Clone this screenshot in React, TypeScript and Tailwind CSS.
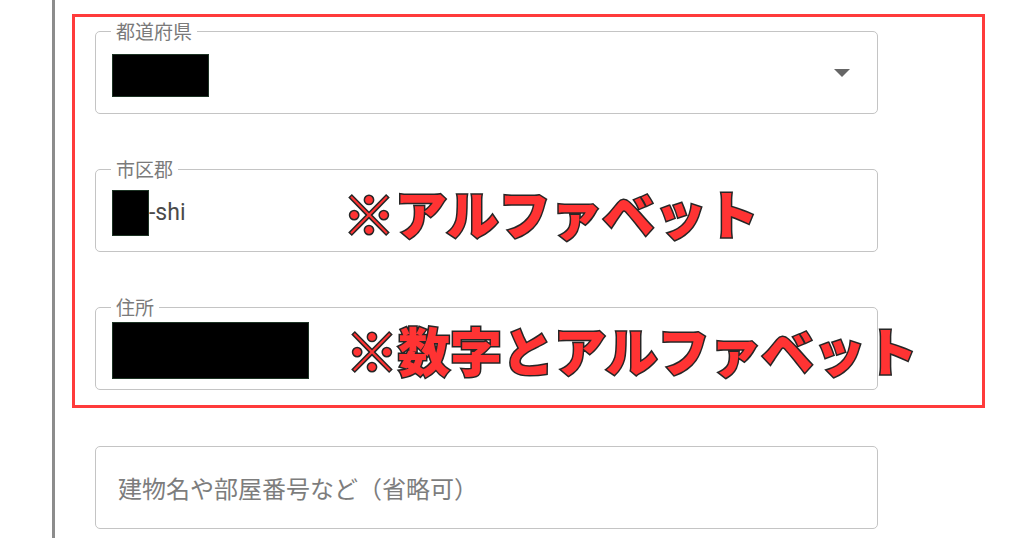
import React from "react";

const jp = "font-['Noto_Sans_CJK_JP','Noto_Sans',sans-serif]";

// outlined field with a label sitting in the top border notch
const Field = ({
  label,
  children,
  className = "",
}: {
  label?: string;
  children?: React.ReactNode;
  className?: string;
}) => (
  <div
    className={`relative h-[83px] w-[783px] rounded-[5px] border-[1.5px] border-[#c4c4c4] bg-white ${className}`}
  >
    {label && (
      <span
        className={`absolute -top-[11px] left-[15px] bg-white px-[5px] text-[19px] leading-[20px] text-[#7a7a7a] ${jp}`}
      >
        {label}
      </span>
    )}
    {children}
  </div>
);

const Mask = ({ w, h }: { w: number; h: number }) => (
  <div
    className="border border-[#1d3324] bg-black"
    style={{ width: w, height: h }}
  />
);

const Note = ({ text, className }: { text: string; className: string }) => (
  <span
    className={`absolute whitespace-nowrap text-[52px] font-black leading-none text-[#ff3333] [-webkit-text-stroke:3px_#262626] [paint-order:stroke_fill] ${jp} ${className}`}
  >
    {text}
  </span>
);

export default function App() {
  return (
    <div className="flex h-[538px] w-[1024px] overflow-hidden bg-white pl-[52px]">
      {/* left rule */}
      <div className="w-[3px] self-stretch bg-[#8c8c8c]" />

      <div className="ml-[17px] flex flex-col pt-[14px]">
        {/* highlighted block */}
        <div className="flex w-[913px] flex-col gap-[55px] border-[3px] border-[#ff3b3b] pb-[15px] pl-[20px] pt-[14px]">
          <Field label="都道府県" className="flex items-center pl-[16px] pt-[5px]">
            <Mask w={97} h={43} />
            <svg
              className="absolute right-[27px] top-[37px]"
              width="16"
              height="8"
              viewBox="0 0 16 8"
            >
              <path d="M0 0h16L8 8z" fill="#666" />
            </svg>
          </Field>

          <Field label="市区郡" className="flex items-center pl-[16px] pt-[5px]">
            <Mask w={37} h={46} />
            <span className="font-['Roboto','Liberation_Sans',sans-serif] text-[23px] text-[#4a4a4a]">
              -shi
            </span>
            <Note text="※アルファベット" className="left-[247px] top-[17px]" />
          </Field>

          <Field label="住所" className="flex items-center pl-[16px] pt-[4px]">
            <Mask w={197} h={57} />
            <Note text="※数字とアルファベット" className="left-[250px] top-[16px]" />
          </Field>
        </div>

        <div className="ml-[23px] mt-[38px]">
          <Field className="flex items-center pl-[22px]">
            <span className={`text-[24px] text-[#7d7d7d] ${jp}`}>
              建物名や部屋番号など（省略可）
            </span>
          </Field>
        </div>
      </div>
    </div>
  );
}
